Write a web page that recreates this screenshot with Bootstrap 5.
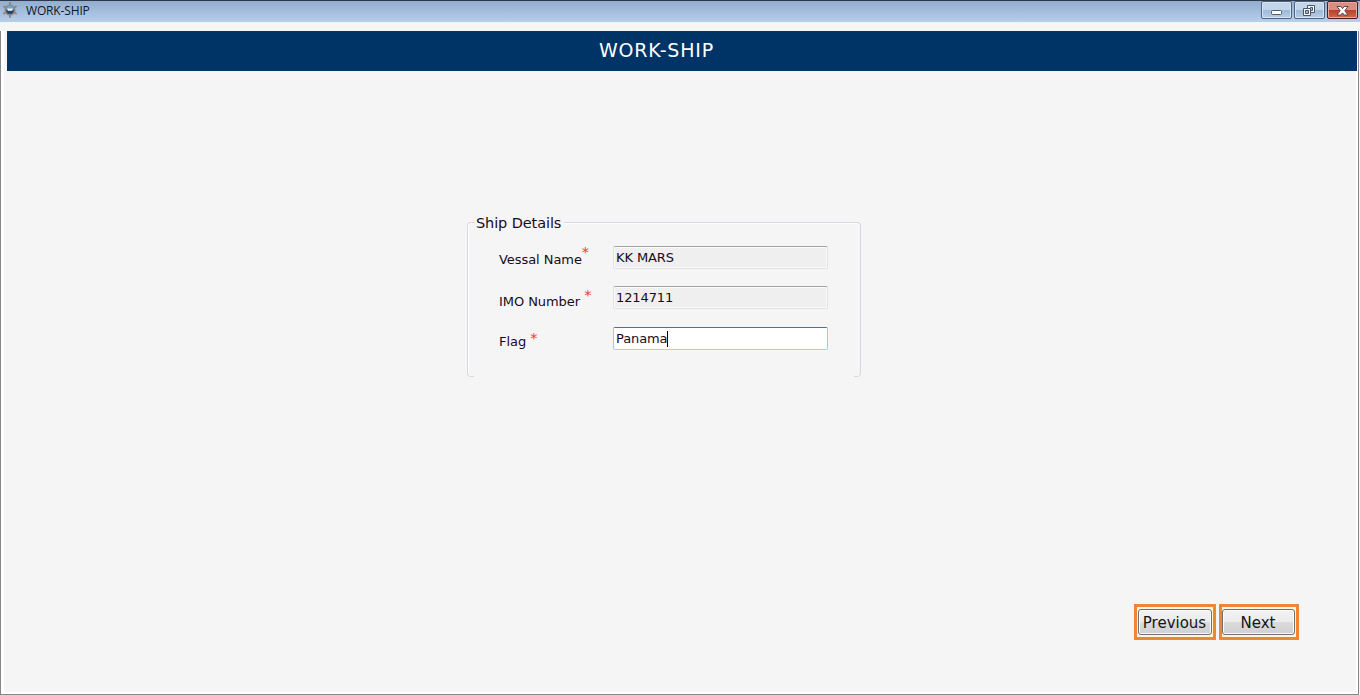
<!DOCTYPE html>
<html lang="en">
<head>
<meta charset="utf-8">
<title>WORK-SHIP</title>
<link href="https://cdn.jsdelivr.net/npm/bootstrap@5.3.0/dist/css/bootstrap.min.css" rel="stylesheet">
<style>
body{font-family:"DejaVu Sans",Verdana,sans-serif;color:#1a0a1c;background:#f5f5f5;font-size:13px;line-height:16px}
.win-title{height:22px;flex:none;background:linear-gradient(#93adce,#a8c1e0 60%,#b6cfeb);border-top:1px solid #30394a;padding:0 2px 0 2px}
.win-icon{width:16px;height:16px;margin-top:1px}
.win-name{font:12px/19px "Open Sans",sans-serif;color:#15151f;margin-left:8px;letter-spacing:-.15px}
.win-btns{gap:2px}
.win-btn{width:31px;height:18px;border:1px solid #50637f;border-radius:2px;box-shadow:inset 0 0 0 1px #d5e3f3;background:linear-gradient(#c2d5eb 50%,#9db9d7 50%,#b6cde6)}
.win-btn.close-win{border-color:#4b1a22;box-shadow:inset 0 0 0 1px #e6a99e;background:linear-gradient(#d98f80 48%,#bb3c28 50%,#d0694f)}
.win-strip{height:9px;flex:none;background:#f4f5f5}
.win-body{border:solid #85868c;border-width:0 1px 1px;margin-right:1px;padding:0 2px 2px 3px;background:#fff}
.win-page{background:#f5f5f5}
.page-head{height:40px;margin:0 -1px 0 3px;background:#003366;color:#fff;font-size:19px;line-height:38px;padding-right:51px;letter-spacing:.82px}
.ship-box{width:394px;height:155px;margin:151px 0 0 463px;border:1px solid #d3d9de;border-bottom-color:transparent;border-radius:4px;padding:23px 0 0 31px;box-shadow:inset 1px 1px 0 #fff}
.ship-title{position:absolute;left:6px;top:-10px;background:#f5f5f5;padding:0 3px 0 2px;font-size:14.5px;line-height:20px;letter-spacing:-.1px;white-space:nowrap}
.foot-corner{position:absolute;bottom:-1px;width:6px;height:5px;border-bottom:1px solid #d3d9de}
.fld-row{height:23px}
.fld-label{width:114px;white-space:nowrap;letter-spacing:-.06px}
.req{color:#f03a28;font-size:14.5px;line-height:10px}
.fld{width:215px;height:23px;border:1px solid #dfe3e8;border-top-color:#a2a4a6;border-radius:2px;background:#efefef;box-shadow:inset 0 0 0 1px #fafafa;padding:2px 2px;line-height:17px;letter-spacing:-.1px}
.fld.on{background:#fff;box-shadow:none;border-color:#4474a6 #9ccbee #a8d4f2 #9ccbee}
.caret{width:1px;height:16px;background:#000;display:inline-block;vertical-align:top;margin-top:1px}
.nav-acts{margin:0 57px 52px 0;gap:3px}
.act-ring{border:3px solid #f08437;background:#fff6d8;height:36px;padding:2px 1px}
.act{height:26px;border:1px solid #707070;border-radius:3px;padding:1px 1px 0 0;font-size:15px;line-height:22px;color:#151515;background:linear-gradient(#f2f2f2,#ebebeb 50%,#dcdcdc 50%,#cfcfcf);box-shadow:inset 0 0 0 1px #fafafa;letter-spacing:0}
</style>
<script src="https://cdn.jsdelivr.net/npm/bootstrap@5.3.0/dist/js/bootstrap.bundle.min.js"></script>
</head>
<body class="vh-100 d-flex flex-column overflow-hidden">
<header class="win-title d-flex align-items-start">
  <svg class="win-icon" viewBox="0 0 16 16"><path d="M8 1v14M2 4.500l12 7M14 4.500l-12 7" stroke="#97847a" stroke-width="2" stroke-linecap="round"/><circle cx="8" cy="8" r="4.800" fill="#35597f" stroke="#97847a" stroke-width="1.600"/><path d="M4 7.600A4 4 0 0 1 12 7.600z" fill="#6fa3cd"/><path d="M5 6.500h6l-1 2.300H6z" fill="#e8f3fa"/><path d="M4.500 9.200h7L10 11.500H6z" fill="#1d4169"/></svg>
  <span class="win-name">WORK-SHIP</span>
  <div class="win-btns d-flex ms-auto">
    <div class="win-btn"><svg class="d-block" width="29" height="16"><rect x="9.5" y="8.5" width="10" height="4" rx="1" fill="#fff" stroke="#555c6b"/></svg></div>
    <div class="win-btn"><svg class="d-block" width="29" height="16" fill="#f5f7fa" stroke="#4d5668"><path d="M12.500 3.500h7v7h-7z"/><path d="M15.500 5.500h2v3h-2z" fill="#a9c2de"/><path d="M8.500 6.500h7v7h-7z"/><path d="M10.500 8.500h3v3h-3z" fill="#9db9d7"/></svg></div>
    <div class="win-btn close-win"><svg class="d-block" width="29" height="16"><path d="M9 4.500h3.700L14.500 6.600l1.800-2.100H20L16.800 8.700l3.200 4.300h-3.700l-1.800-2.100-1.800 2.100H9l3.200-4.300z" fill="#fff" stroke="#5b4550"/></svg></div>
  </div>
</header>
<div class="win-strip"></div>
<div class="win-body flex-grow-1 d-flex">
  <main class="win-page flex-grow-1 d-flex flex-column">
    <div class="page-head text-center">WORK-SHIP</div>
    <section class="ship-box position-relative">
      <span class="ship-title">Ship Details</span>
      <div class="fld-row d-flex" style="margin-bottom:17px">
        <div class="fld-label" style="padding-top:6px">Vessal Name<span class="req position-relative" style="top:-7px">*</span></div>
        <div class="fld">KK MARS</div>
      </div>
      <div class="fld-row d-flex" style="margin-bottom:18px">
        <div class="fld-label" style="padding-top:8px">IMO Number <span class="req position-relative" style="top:-6px">*</span></div>
        <div class="fld">1214711</div>
      </div>
      <div class="fld-row d-flex">
        <div class="fld-label" style="padding-top:7px">Flag <span class="req position-relative" style="top:-3px">*</span></div>
        <div class="fld on">Panama<span class="caret"></span></div>
      </div>
      <i class="foot-corner" style="left:0;border-bottom-left-radius:3px"></i>
      <i class="foot-corner" style="right:0;border-bottom-right-radius:3px"></i>
    </section>
    <div class="nav-acts d-flex justify-content-end mt-auto">
      <div class="act-ring" style="width:82px"><button class="act w-100">Previous</button></div>
      <div class="act-ring" style="width:80px;padding-left:0"><button class="act w-100">Next</button></div>
    </div>
  </main>
</div>
</body>
</html>
